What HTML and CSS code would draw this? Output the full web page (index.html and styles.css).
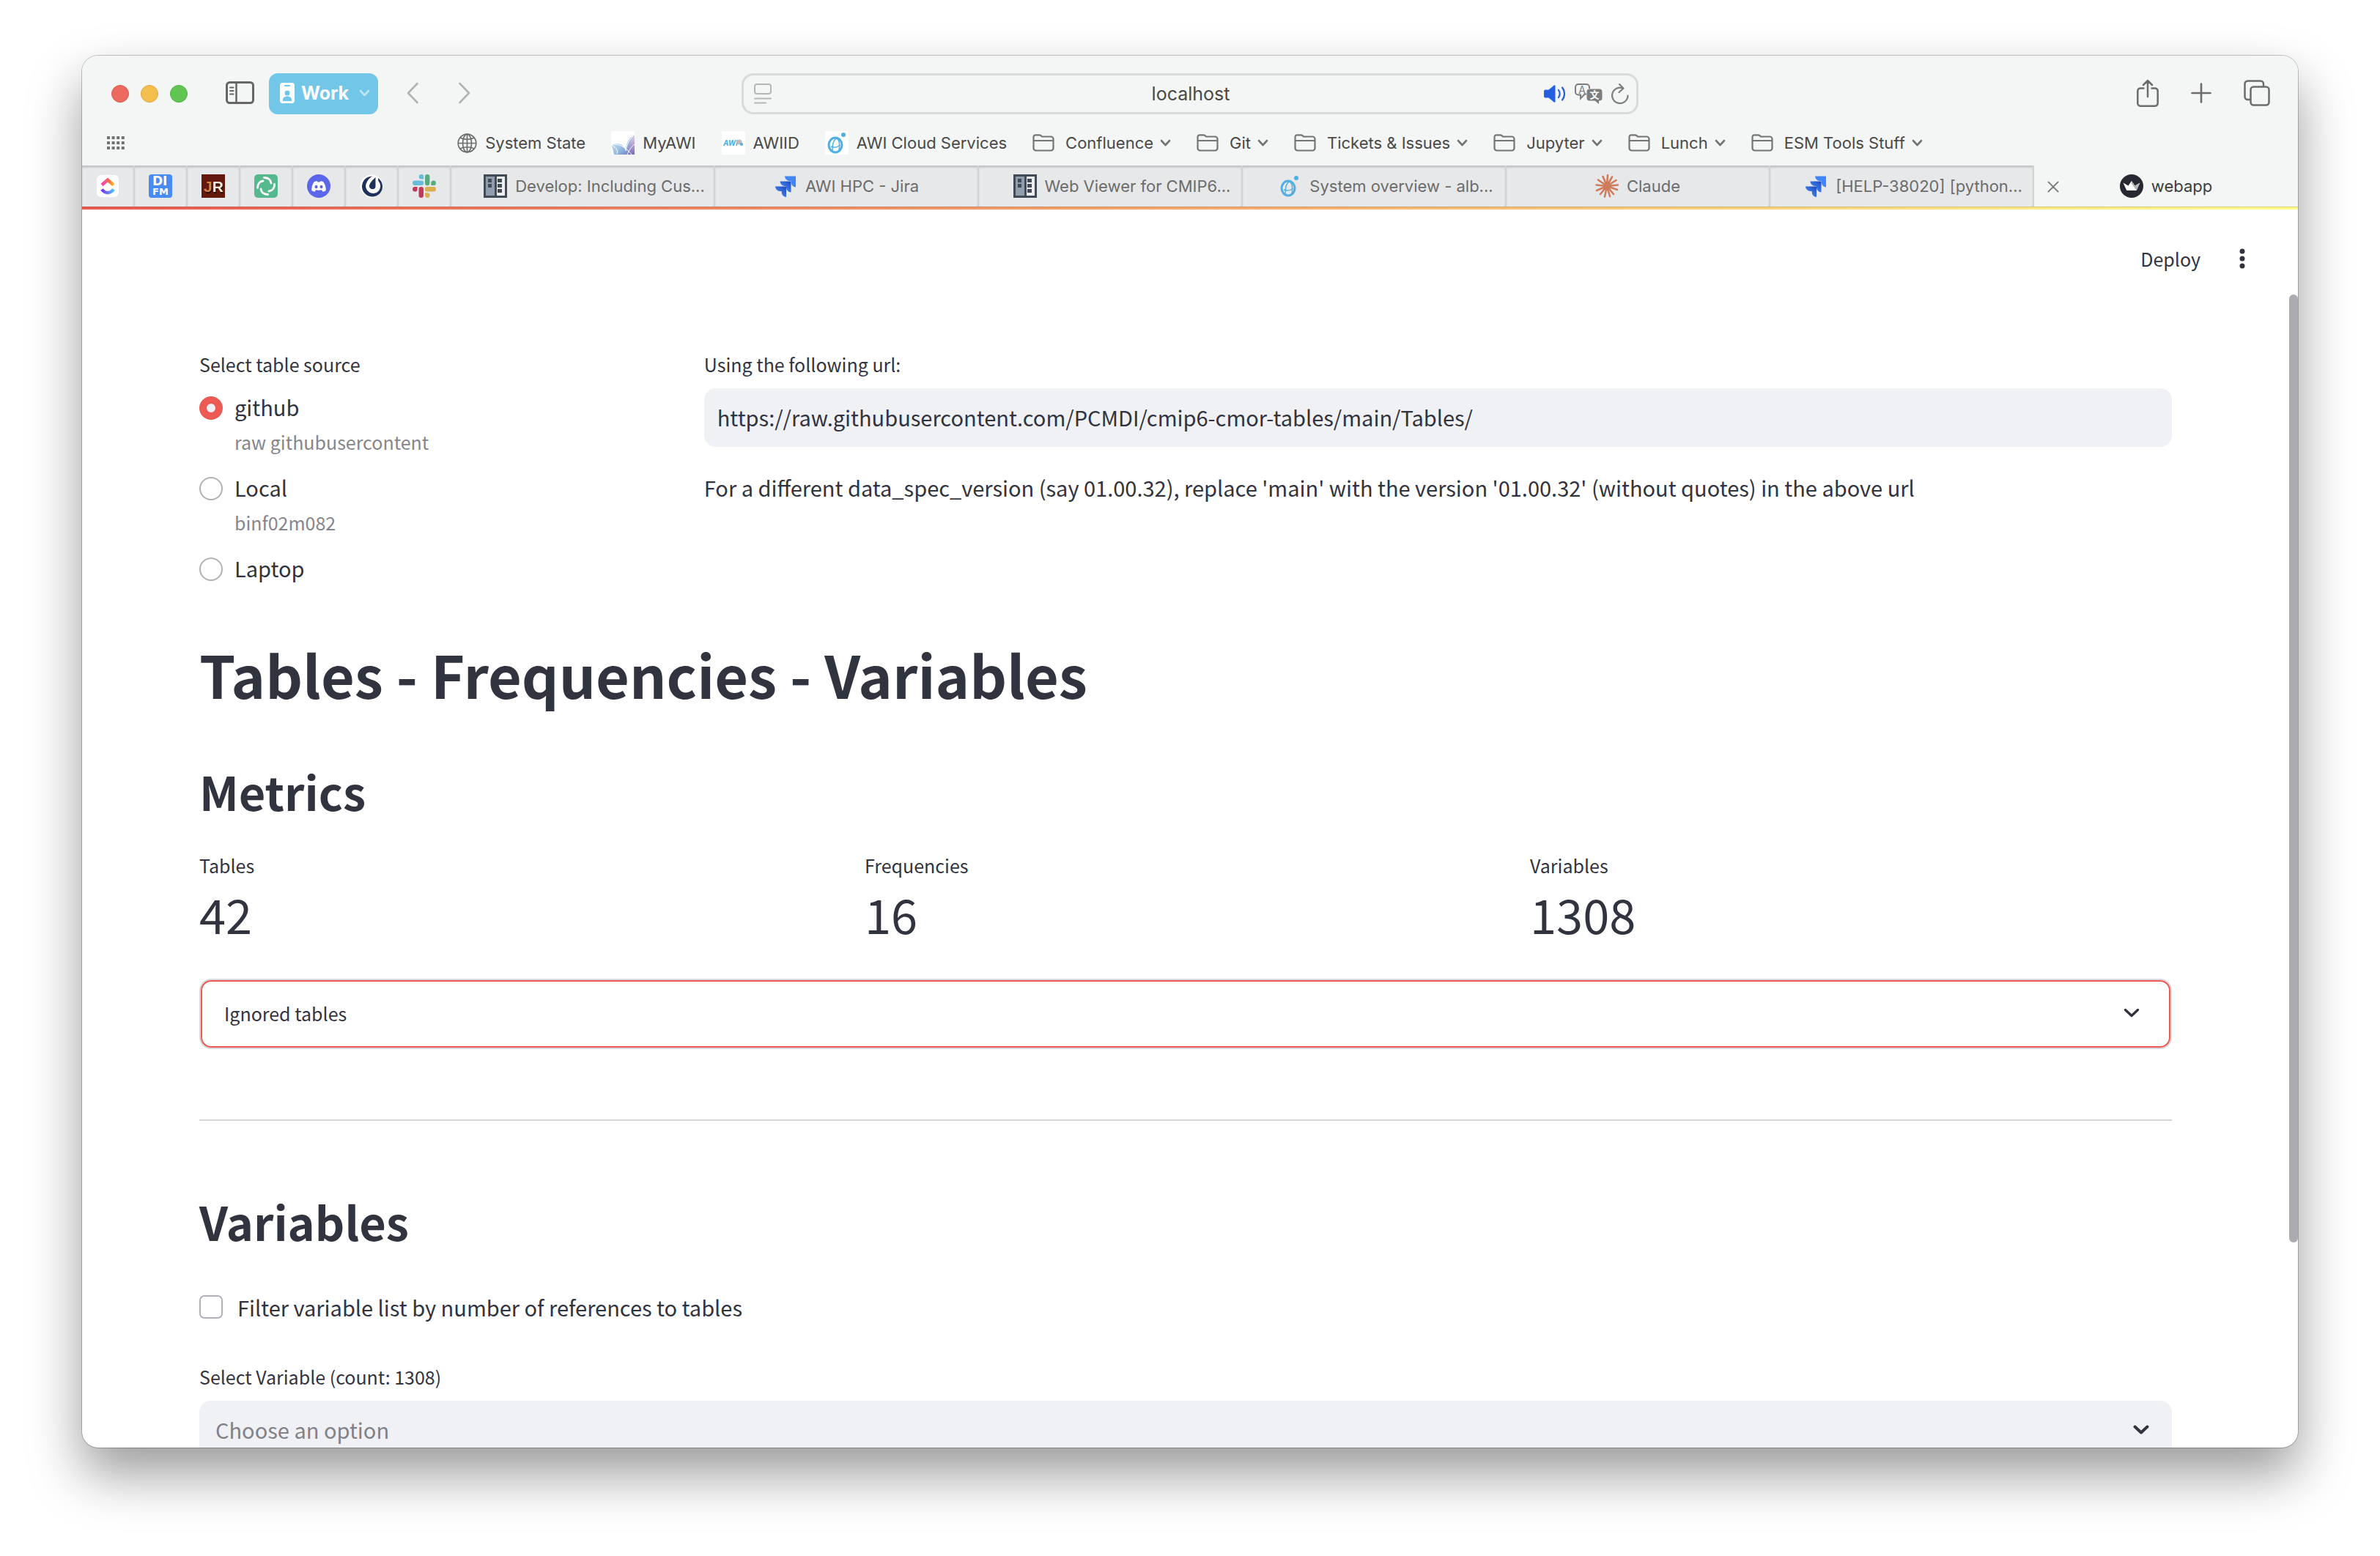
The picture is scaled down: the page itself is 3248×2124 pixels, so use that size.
FILE: index.html
```html
<!DOCTYPE html>
<html lang="en">
<head>
<meta charset="utf-8">
<meta name="viewport" content="width=device-width, initial-scale=1">
<title>webapp</title>
<link rel="stylesheet" href="styles.css">
</head>
<body>
<svg class="defs" aria-hidden="true">
  <defs>
    <linearGradient id="cu-top" x1="0" x2="1"><stop offset="0" stop-color="#f03fc0"/><stop offset=".6" stop-color="#fb6a4a"/><stop offset="1" stop-color="#ffbf2b"/></linearGradient>
    <linearGradient id="cu-bot" x1="0" x2="1"><stop offset="0" stop-color="#8430ee"/><stop offset="1" stop-color="#48c4fa"/></linearGradient>
    <linearGradient id="jira-fade" x1="1" y1="0" x2=".3" y2=".8"><stop offset="0" stop-color="#1c49b8"/><stop offset="1" stop-color="#4285fb"/></linearGradient>
    <linearGradient id="petal" x1="0" y1="0" x2="1" y2="1"><stop offset="0" stop-color="#e8f4fb"/><stop offset=".6" stop-color="#8fb6e2"/><stop offset="1" stop-color="#6a62b8"/></linearGradient>
    <linearGradient id="petal-pink" x1="0" y1="1" x2="0" y2="0"><stop offset="0" stop-color="#7b6fc0"/><stop offset="1" stop-color="#e9cfe6"/></linearGradient>
    <symbol id="folder" viewBox="0 0 30 24"><path d="M1.500 5V4a2.700 2.700 0 0 1 2.700-2.700h5.300c1 0 1.500.3 2.200 1l1.200 1.200h12.400a3.200 3.200 0 0 1 3.200 3.200v12.600a3.200 3.200 0 0 1-3.200 3.200H4.700a3.200 3.200 0 0 1-3.200-3.200zM1.500 9h27" fill="none" stroke="#737473" stroke-width="2.200"/></symbol>
    <symbol id="chev" viewBox="0 0 15 10"><path d="M2 2l5.500 6L13 2" fill="none" stroke="currentColor" stroke-width="2.600" stroke-linecap="round" stroke-linejoin="round"/></symbol>
    <symbol id="jira" viewBox="0 0 32 32"><path d="M15 2.500h15v15a6.500 6.500 0 0 1-6.300-6.500V9H21.500A6.500 6.500 0 0 1 15 2.500z" fill="#4285fb"/><path d="M8.500 9.500h15v15a6.500 6.500 0 0 1-6.500-6.500v-2h-2A6.500 6.500 0 0 1 8.500 9.500z" fill="url(#jira-fade)"/><path d="M2 16.500h15v14.500a6.500 6.500 0 0 1-6.300-6.500V23H8.500A6.500 6.500 0 0 1 2 16.500z" fill="url(#jira-fade)"/></symbol>
    <symbol id="board" viewBox="0 0 32 32"><path d="M0 0h32v32H0z" fill="#424b55"/><path d="M3 3h12v26H3z" fill="#8f9dac"/><path d="M18 3h11v26H18z" fill="#eceeef"/><path d="M6 6h5v5H6zM6 13h5v5H6zM19 6h6v5h-6zM19 13h6v5h-6zM19 20h6v5h-6z" fill="#424b55"/></symbol>
    <symbol id="orbit" viewBox="0 0 32 32"><g fill="none" stroke="#50aee2"><ellipse cx="14" cy="19" rx="9" ry="10" stroke-width="3"/><path d="M10 27c0-10 2-16 6-17 4 2 4 10 3 17M8 21c5 2 9 1 13-2" stroke-width="1.500"/></g><circle cx="25" cy="5" r="3" fill="#50aee2"/></symbol>
  </defs>
</svg>

<div class="window">
  <header class="toolbar">
    <div class="toolbar-main">
      <div class="group group-left">
        <div class="lights"><i class="light red"></i><i class="light yellow"></i><i class="light green"></i></div>
        <button class="icon-button sidebar-button" aria-label="Show sidebar"><svg width="40" height="32" viewBox="0 0 40 32" fill="none" stroke="#656665"><rect x="1.500" y="1.500" width="36" height="28" rx="4" stroke-width="3"/><path d="M14.500 2v27" stroke-width="2.500"/><path d="M6 8.500h4.500M6 13h4.500M6 17.500h4.500" stroke-width="2" stroke-linecap="round"/></svg></button>
        <button class="profile"><svg width="20" height="28" viewBox="0 0 20 28"><rect width="20" height="28" rx="4" fill="#fff"/><rect x="6" y="3" width="8" height="2" rx="1" fill="#72c6e8"/><circle cx="10" cy="14" r="3.500" fill="#72c6e8"/><path d="M4 25v-2c0-3 3-4.500 6-4.500s6 1.500 6 4.500v2z" fill="#72c6e8"/></svg><span>Work</span><svg class="profile-chev" width="15" height="10"><use href="#chev"/></svg></button>
        <button class="icon-button back" aria-label="Back"><svg width="18" height="30" viewBox="0 0 18 30"><path d="M15.500 2L3 15l12.500 13" fill="none" stroke="#b2b3b3" stroke-width="2.600" stroke-linecap="round" stroke-linejoin="round"/></svg></button>
        <button class="icon-button forward" aria-label="Forward"><svg width="18" height="30" viewBox="0 0 18 30"><path d="M2.500 2L15 15 2.500 28" fill="none" stroke="#b2b3b3" stroke-width="2.600" stroke-linecap="round" stroke-linejoin="round"/></svg></button>
      </div>
      <div class="address">
        <svg width="24" height="28" viewBox="0 0 24 28" fill="none" stroke="#b5b6b6" stroke-width="2" stroke-linecap="round"><rect x="1" y="1" width="22" height="13" rx="3"/><path d="M1 20.500h22M1 26.500h15"/></svg>
        <input class="address-input" type="text" value="localhost" aria-label="Address">
        <div class="address-icons">
          <svg width="30" height="24" viewBox="0 0 30 24"><path d="M0 8.500A2 2 0 0 1 2 6.500h4.500L13.500.700c1-.800 2-.300 2 .900v20.800c0 1.200-1 1.700-2 .900L6.500 17.500H2a2 2 0 0 1-2-2z" fill="#245fe0"/><path d="M20 7c2 3 2 7 0 10M25 3.500c4 5 4 12 0 17" fill="none" stroke="#245fe0" stroke-width="2.200" stroke-linecap="round"/></svg>
          <svg width="38" height="28" viewBox="0 0 38 28"><path d="M16 14.500h-2.500L8 20.500v-5H5a4 4 0 0 1-4-4V5a4 4 0 0 1 4-4h11a4 4 0 0 1 4 4v2" fill="none" stroke="#7c7d7c" stroke-width="2"/><text x="10" y="13.500" class="glyph-a">A</text><path d="M20.500 7.500h13a4 4 0 0 1 4 4v8a4 4 0 0 1-4 4H33V28l-5.500-4.500h-7a4 4 0 0 1-4-4v-8a4 4 0 0 1 4-4z" fill="#7c7d7c"/><text x="27" y="20" class="glyph-wen">文</text></svg>
          <svg width="24" height="28" viewBox="0 0 24 28" fill="none" stroke="#7c7d7c" stroke-width="2.200" stroke-linecap="round" stroke-linejoin="round"><path d="M22.500 16.500A10.700 10.700 0 1 1 16 6.500"/><path d="M11 1l5.500 5.500L10.500 12"/></svg>
        </div>
      </div>
      <div class="group group-right">
        <button class="icon-button" aria-label="Share"><svg width="30" height="38" viewBox="0 0 30 38" fill="none" stroke="#6b6c6b" stroke-width="2.500" stroke-linecap="round" stroke-linejoin="round"><path d="M9.500 12.500H5A3.700 3.700 0 0 0 1.300 16v17A3.700 3.700 0 0 0 5 36.700h20a3.700 3.700 0 0 0 3.700-3.700V16a3.700 3.700 0 0 0-3.700-3.500h-4.500M15 24V2M9 8l6-6 6 6"/></svg></button>
        <button class="icon-button" aria-label="New tab"><svg width="28" height="28" viewBox="0 0 28 28"><path d="M14 1.500v25M1.500 14h25" stroke="#6b6c6b" stroke-width="2.600" stroke-linecap="round"/></svg></button>
        <button class="icon-button" aria-label="Tab overview"><svg width="36" height="36" viewBox="0 0 36 36" fill="none" stroke="#6b6c6b" stroke-width="2.500"><rect x="9.500" y="9.500" width="25" height="25" rx="4"/><path d="M9 27H5.500a4 4 0 0 1-4-4V5.500a4 4 0 0 1 4-4H23a4 4 0 0 1 4 4V9"/></svg></button>
      </div>
    </div>
    <nav class="bookmarks" aria-label="Favorites">
      <button class="icon-button grid-button" aria-label="Show all"><svg width="24" height="18" viewBox="0 0 24 18" stroke="#727372" stroke-width="4" stroke-dasharray="4 2.600"><path d="M0 2h24M0 9h24M0 16h24"/></svg></button>
      <div class="bookmark-list">
        <a href="#" class="bookmark"><svg width="27" height="27" viewBox="0 0 27 27" fill="none" stroke="#6d6e6d" stroke-width="1.700"><circle cx="13.500" cy="13.500" r="12.300"/><ellipse cx="13.500" cy="13.500" rx="6" ry="12.300"/><path d="M13.500 1v25M1 13.500h25M4 6c5 3 14 3 19 0M4 21c5-3 14-3 19 0"/></svg>System State</a>
        <a href="#" class="bookmark"><svg width="32" height="32" viewBox="0 0 32 32"><path d="M0 0h32v32H0z" fill="#fff"/><path d="M8 17c6 0 10 4 12 10 0-8 3-16 9-20l3-1v26H4C3 27 2 22 0 20c3-2 5-3 8-3z" fill="url(#petal)"/><path d="M32 6v26h-8c-2-10 2-20 8-26z" fill="url(#petal-pink)"/><path d="M8 31C10 25 5 21 0 19M28 32C20 22 12 18 5 18M20 27c1-8 4-14 10-20M22 32c3-7 6-11 10-14" fill="none" stroke="#fff" stroke-width="1"/></svg>MyAWI</a>
        <a href="#" class="bookmark"><svg width="32" height="32" viewBox="0 0 32 32"><path d="M0 0h32v32H0z" fill="#fff"/><text x="2" y="20" class="glyph-awi">AWI</text><circle cx="24" cy="15" r="3.500" fill="#bcbcbc"/><circle cx="27" cy="18" r="2" fill="#50aee2"/></svg>AWIID</a>
        <a href="#" class="bookmark"><svg class="on-white" width="32" height="32"><use href="#orbit"/></svg>AWI Cloud Services</a>
        <a href="#" class="bookmark folder"><svg width="30" height="24"><use href="#folder"/></svg>Confluence<svg class="chev" width="15" height="10"><use href="#chev"/></svg></a>
        <a href="#" class="bookmark folder"><svg width="30" height="24"><use href="#folder"/></svg>Git<svg class="chev" width="15" height="10"><use href="#chev"/></svg></a>
        <a href="#" class="bookmark folder"><svg width="30" height="24"><use href="#folder"/></svg>Tickets &amp; Issues<svg class="chev" width="15" height="10"><use href="#chev"/></svg></a>
        <a href="#" class="bookmark folder"><svg width="30" height="24"><use href="#folder"/></svg>Jupyter<svg class="chev" width="15" height="10"><use href="#chev"/></svg></a>
        <a href="#" class="bookmark folder"><svg width="30" height="24"><use href="#folder"/></svg>Lunch<svg class="chev" width="15" height="10"><use href="#chev"/></svg></a>
        <a href="#" class="bookmark folder"><svg width="30" height="24"><use href="#folder"/></svg>ESM Tools Stuff<svg class="chev" width="15" height="10"><use href="#chev"/></svg></a>
      </div>
    </nav>
  </header>

  <nav class="tabs" aria-label="Tabs">
    <a href="#" class="tab" aria-label="ClickUp"><svg width="32" height="32" viewBox="0 0 32 32"><rect x="1" y="1" width="30" height="30" rx="6" fill="#fff"/><path d="M8 14.500l8-7 8 7" fill="none" stroke="url(#cu-top)" stroke-width="4.500"/><path d="M8 20.500c4.500 6 11.500 6 16 0" fill="none" stroke="url(#cu-bot)" stroke-width="4.500"/></svg></a>
    <a href="#" class="tab" aria-label="DI.FM"><svg width="32" height="32" viewBox="0 0 32 32"><rect width="32" height="32" rx="4" fill="#478bf5"/><text x="5" y="15" class="glyph-di">DI</text><text x="5" y="28" class="glyph-fm">FM</text></svg></a>
    <a href="#" class="tab" aria-label="JR"><svg width="32" height="32" viewBox="0 0 32 32"><path d="M0 0h32v32H0z" fill="#64180e"/><text x="3" y="24" class="glyph-jr"><tspan fill="#d8853c">J</tspan><tspan fill="#f2e6d8">R</tspan></text></svg></a>
    <a href="#" class="tab" aria-label="Element"><svg width="32" height="32" viewBox="0 0 32 32"><rect width="32" height="32" rx="5" fill="#56b88d"/><g fill="none" stroke="#fff" stroke-width="2.800" stroke-linecap="round"><path d="M13.500 4.500c5.500 0 9 3 9.500 7.500"/><path d="M27.500 13.500c0 5.500-3 9-7.500 9.500"/><path d="M18.500 27.500c-5.500 0-9-3-9.500-7.500"/><path d="M4.500 18.500c0-5.500 3-9 7.500-9.500"/></g></svg></a>
    <a href="#" class="tab" aria-label="Discord"><svg width="32" height="32" viewBox="0 0 32 32"><circle cx="16" cy="16" r="16" fill="#5b66ea"/><path d="M10 10l3.500-1 .8 1.500h3.400l.8-1.500 3.500 1c2.500 3.500 4 7.500 3.700 12-1.700 1-3 1.500-4.500 1.500l-1.200-2.200c-2.500.6-5.500.6-8 0l-1.200 2.200c-1.500 0-2.800-.5-4.500-1.500C6 17.500 7.500 13.500 10 10z" fill="#fff"/><ellipse cx="12.500" cy="17" rx="2" ry="2.200" fill="#5b66ea"/><ellipse cx="19.500" cy="17" rx="2" ry="2.200" fill="#5b66ea"/></svg></a>
    <a href="#" class="tab" aria-label="Mattermost"><svg width="32" height="32" viewBox="0 0 32 32"><circle cx="16" cy="16" r="15.500" fill="#fff"/><path d="M17 2.500a14 14 0 1 0 8 2.500l.3 4A10 10 0 1 1 9 12c1.500-4 4-7 8-9.500z" fill="#1e325c"/><path d="M21.500 4v12.500c0 5.500-9 5-8.500-1 .2-3 4-7.500 8.500-11.500z" fill="#1e325c"/></svg></a>
    <a href="#" class="tab" aria-label="Slack"><svg width="32" height="32" viewBox="0 0 32 32"><path d="M12 0a3.200 3.200 0 0 1 3.200 3.200v3.300H12A3.200 3.200 0 0 1 12 0zM3.300 8.500h8.700a3.200 3.200 0 0 1 0 6.500H3.300a3.200 3.200 0 0 1 0-6.500z" fill="#67bcdc"/><path d="M20.200 0a3.200 3.200 0 0 1 3.200 3.200V12A3.200 3.200 0 0 1 17 12V3.200A3.200 3.200 0 0 1 20.200 0zM25.300 15v-3.200a3.300 3.300 0 1 1 3.300 3.200z" fill="#57ab7d"/><path d="M20 17h8.700a3.200 3.200 0 0 1 0 6.500H20A3.200 3.200 0 0 1 20 17zM17 25.300h3.200a3.300 3.300 0 1 1-3.200 3.300z" fill="#dcae4e"/><path d="M6.600 17v3.200A3.300 3.300 0 1 1 3.300 17zM11.800 17a3.200 3.200 0 0 1 3.200 3.200v8.500a3.200 3.200 0 0 1-6.500 0v-8.500a3.200 3.200 0 0 1 3.300-3.200z" fill="#c23a5a"/></svg></a>
    <a href="#" class="tab clipped"><svg width="32" height="32"><use href="#board"/></svg>Develop: Including Cus...</a>
    <a href="#" class="tab"><svg width="32" height="32"><use href="#jira"/></svg>AWI HPC - Jira</a>
    <a href="#" class="tab clipped"><svg width="32" height="32"><use href="#board"/></svg>Web Viewer for CMIP6...</a>
    <a href="#" class="tab clipped"><svg width="32" height="32"><use href="#orbit"/></svg>System overview - alb...</a>
    <a href="#" class="tab"><svg width="32" height="32" viewBox="0 0 32 32"><path d="M16 16L17 1M16 16L23 3.500M16 16L28.500 8M16 16l15-1.500M16 16l14 5M16 16l9 11M16 16l4 14M16 16l-3 14.500M16 16L7 27M16 16L2 22M16 16L1.500 14.500M16 16L4 7.500M16 16L10.500 3" stroke="#cf7b5c" stroke-width="2.600" stroke-linecap="round"/></svg>Claude</a>
    <a href="#" class="tab clipped"><svg width="32" height="32"><use href="#jira"/></svg>[HELP-38020] [python...</a>
    <div class="tab active">
      <button class="icon-button close" aria-label="Close tab"><svg width="16" height="16" viewBox="0 0 16 16"><path d="M1.500 1.500l13 13M14.500 1.500l-13 13" stroke="#7a7b7a" stroke-width="1.800" stroke-linecap="round"/></svg></button>
      <svg width="32" height="32" viewBox="0 0 32 32"><circle cx="16" cy="16" r="16" fill="#272831"/><path d="M4.500 11.500l7 4L16 9l4.500 6.500 7-4-4.300 9.500c-.3.700-.7 1-1.400 1H10.200c-.7 0-1.100-.3-1.400-1z" fill="#fff"/><path d="M27.500 11.500l-7 4L16 9v4l6.500 8.500z" fill="#b4b4b6"/></svg>webapp
    </div>
  </nav>

  <div class="page">
    <div class="decoration"></div>
    <header class="app-header">
      <button class="deploy">Deploy</button>
      <button class="icon-button" aria-label="Main menu"><svg width="8" height="28" viewBox="0 0 8 28" fill="#31333f"><circle cx="4" cy="4" r="3.500"/><circle cx="4" cy="14" r="3.500"/><circle cx="4" cy="24" r="3.500"/></svg></button>
    </header>

    <main class="content">
      <section class="source">
        <fieldset class="radios">
          <legend class="label">Select table source</legend>
          <label class="option"><input type="radio" name="source" checked><span>github</span><small>raw githubusercontent</small></label>
          <label class="option"><input type="radio" name="source"><span>Local</span><small>binf02m082</small></label>
          <label class="option"><input type="radio" name="source"><span>Laptop</span></label>
        </fieldset>
        <div>
          <label class="label" for="url">Using the following url:</label>
          <input class="field" id="url" type="text" value="https://raw.githubusercontent.com/PCMDI/cmip6-cmor-tables/main/Tables/">
          <p class="note">For a different data_spec_version (say 01.00.32), replace 'main' with the version '01.00.32' (without quotes) in the above url</p>
        </div>
      </section>

      <h1>Tables - Frequencies - Variables</h1>
      <h2>Metrics</h2>
      <dl class="metrics">
        <div><dt class="label">Tables</dt><dd>42</dd></div>
        <div><dt class="label">Frequencies</dt><dd>16</dd></div>
        <div><dt class="label">Variables</dt><dd>1308</dd></div>
      </dl>

      <details class="expander">
        <summary>Ignored tables<svg width="22" height="14" viewBox="0 0 22 14"><path d="M2.500 2.500L11 10.500l8.500-8" fill="none" stroke="#31333f" stroke-width="3.400" stroke-linecap="round" stroke-linejoin="round"/></svg></summary>
      </details>
      <hr>

      <h2>Variables</h2>
      <label class="check"><input type="checkbox"><span>Filter variable list by number of references to tables</span></label>
      <label class="label" for="variable">Select Variable (count: 1308)</label>
      <div class="select-wrap">
        <select class="field" id="variable"><option>Choose an option</option></select>
        <svg width="22" height="14" viewBox="0 0 22 14"><path d="M2.500 2.500L11 10.500l8.500-8" fill="none" stroke="#31333f" stroke-width="4" stroke-linecap="round" stroke-linejoin="round"/></svg>
      </div>
    </main>
    <div class="scroll-thumb"></div>
  </div>
</div>
</body>
</html>
```
FILE: styles.css
```css
* { box-sizing: border-box; }

:root {
  --ink: #31333f;
  --muted: #85868c;
  --field: #f0f1f5;
  --accent: #ec5a53;
  --chrome: #f4f6f5;
  --ui: Inter, "Liberation Sans", sans-serif;
  --app: "Noto Sans CJK JP", "Noto Sans CJK SC", "Noto Sans", sans-serif;
}

body {
  margin: 0;
  padding: 76px 112px 148px;
  height: 100vh;
  background: #fff;
  font-family: var(--ui);
}

a { color: inherit; text-decoration: none; }
svg { display: block; flex: none; }
button { font: inherit; color: inherit; border: 0; padding: 0; background: none; }
.icon-button { display: flex; align-items: center; }
.defs { position: absolute; width: 0; height: 0; }

/* Window frame */
.window {
  display: flex;
  flex-direction: column;
  height: 100%;
  overflow: hidden;
  border-radius: 22px;
  background: #fff;
  box-shadow: 0 0 0 1px rgba(0, 0, 0, .22), 0 36px 72px rgba(0, 0, 0, .4);
}

.toolbar { flex: none; padding-top: 24px; background: var(--chrome); }
.toolbar-main {
  display: grid;
  grid-template-columns: 1fr minmax(0, 1224px) 1fr;
  height: 56px;
}
.group { display: flex; align-items: center; }
.group-left { padding-left: 40px; }
.group-right { justify-content: flex-end; gap: 44px; padding-right: 38px; }
.group .icon-button { margin-bottom: 3px; }

.lights { display: flex; gap: 16px; }
.light { width: 24px; height: 24px; border-radius: 50%; border: 1px solid; }
.light.red { background: #ec6a5e; border-color: #d9584c; }
.light.yellow { background: #f4bf4f; border-color: #dca73a; }
.light.green { background: #61c554; border-color: #4fae43; }

.sidebar-button { margin-left: 52px; }
.profile {
  display: flex;
  align-items: center;
  height: 56px;
  margin-left: 19px;
  padding: 0 11px 2px 15px;
  border-radius: 12px;
  background: #72c6e8;
  color: #fff;
  font-size: 25px;
  font-weight: 700;
}
.profile span { margin: 0 14px 0 9px; }
.profile-chev { color: #bfe5f5; }
.back { margin-left: 38px; }
.forward { margin-left: 53px; }

.address {
  position: relative;
  display: flex;
  align-items: center;
  justify-content: space-between;
  padding: 0 10px 0 14px;
  border: 3px solid #d9dbda;
  border-radius: 16px;
}
.address-input {
  flex: 1;
  min-width: 0;
  padding: 0 0 0 90px;
  border: 0;
  background: none;
  color: #484948;
  font: 25px/32px var(--ui);
  text-align: center;
}
.address-icons { display: flex; align-items: center; gap: 12px; }

.glyph-a { font: 14px var(--ui); fill: #7c7d7c; text-anchor: middle; }
.glyph-wen { font: bold 13px "Noto Sans CJK SC", sans-serif; fill: #fff; text-anchor: middle; }
.glyph-awi { font: italic bold 10px var(--ui); fill: #50aee2; }
.glyph-di { font: bold 17px "DejaVu Sans", sans-serif; fill: #fff; }
.glyph-fm { font: bold 13px "DejaVu Sans", sans-serif; fill: #fff; }
.glyph-jr { font: bold 21px "Liberation Sans", sans-serif; filter: drop-shadow(1px 2px 0 #2a0d08); }

.bookmarks {
  display: grid;
  grid-template-columns: 1fr auto 1fr;
  align-items: center;
  height: 58px;
  margin: 10px 0 2px;
}
.grid-button { margin-left: 34px; }
.bookmark-list { display: flex; gap: 35px; }
.bookmark {
  display: flex;
  align-items: center;
  gap: 11px;
  height: 32px;
  color: #484948;
  font-size: 22px;
  white-space: nowrap;
}
.bookmark.folder { gap: 15px; }
.bookmark .chev { margin-left: -6px; color: #737473; }
.on-white { background: #fff; }

/* Tab strip: seven pinned tabs, then equal-width ones */
.tabs {
  display: grid;
  flex: none;
  grid-template-columns: repeat(7, 72px) repeat(7, minmax(0, 1fr));
  height: 56px;
  color: #6b6c6c;
  font-size: 22px;
}
.tab {
  position: relative;
  display: flex;
  align-items: center;
  justify-content: center;
  gap: 11px;
  border-right: 2px solid #d0d2d3;
  background: #e7e8ea;
  box-shadow: inset 0 3px 3px -1px rgba(0, 0, 0, .2);
  white-space: nowrap;
}
.tab.clipped { padding-left: 32px; }
.tab.active { border: 0; background: var(--chrome); box-shadow: none; color: #3c3d3c; }
.close { position: absolute; left: 18px; top: 21px; }

/* Page */
.page {
  position: relative;
  flex: 1;
  min-height: 0;
  overflow: hidden;
  color: var(--ink);
  font: 29px/40px var(--app);
}
.decoration {
  height: 4px;
  background: linear-gradient(90deg, #eb5a50, #f4a86d 50%, #fdfc8b);
  box-shadow: inset 0 1px rgba(0, 0, 0, .15);
}
.app-header {
  display: flex;
  align-items: center;
  justify-content: flex-end;
  gap: 53px;
  height: 116px;
  padding: 18px 72px 0 0;
}
.deploy { font-size: 25px; }

.content { padding: 75px 172px 0 160px; }
.label { display: block; padding: 0; font-size: 25px; line-height: 40px; }

.source { display: grid; grid-template-columns: 1fr 3fr; gap: 21px; }
.radios { min-width: 0; margin: 0; padding: 0; border: 0; }
.option {
  display: grid;
  grid-template-columns: 32px 1fr;
  column-gap: 16px;
  align-items: center;
  margin-top: 24px;
}
.label + .option { margin-top: 20px; }
.option span { line-height: 36px; padding-bottom: 4px; }
.option small { grid-column: 2; margin-top: 6px; color: var(--muted); font-size: 25px; }

input[type="radio"], input[type="checkbox"] {
  appearance: none;
  flex: none;
  width: 32px;
  height: 32px;
  margin: 0;
  border: 2px solid #b0b1b6;
  border-radius: 50%;
  background: #fff;
}
input[type="radio"]:checked { border: 10px solid var(--accent); background: var(--field); }
input[type="checkbox"] { border-radius: 7px; }

.field {
  display: block;
  appearance: none;
  width: 100%;
  height: 80px;
  margin-top: 13px;
  padding: 0 18px 2px;
  border: 0;
  border-radius: 16px;
  background: var(--field);
  color: var(--ink);
  font: 29px/40px var(--app);
}
.note { margin: 32px 0 0; line-height: 46px; }

h1, h2 { font-weight: 700; }
h1 { margin: 70px 0 63px; font-size: 79px; line-height: 106px; }
h2 { margin: 0; font-size: 63px; line-height: 88px; }

.metrics { display: grid; grid-template-columns: repeat(3, 1fr); gap: 32px; margin: 37px 0 46px; }
.metrics dd { margin: 3px 0 0; font-size: 65px; line-height: 86px; }

.expander {
  border: 2px solid #d6d7da;
  border-radius: 16px;
}
.expander summary {
  display: flex;
  align-items: center;
  justify-content: space-between;
  height: 92px;
  padding: 0 40px 2px 30px;
  border: 2px solid var(--accent);
  border-radius: 14px;
  font-size: 25px;
  list-style: none;
}
hr { height: 2px; margin: 96px 0 93px; border: 0; background: #d6d6d9; }

.check { display: flex; align-items: center; gap: 20px; margin: 53px 0 55px; }
.select-wrap { position: relative; }
.select-wrap .field { padding-left: 22px; color: #808188; }
.select-wrap svg { position: absolute; right: 31px; top: 33px; }

.scroll-thumb {
  position: absolute;
  top: 120px;
  right: 0;
  width: 12px;
  height: 1294px;
  border-radius: 6px;
  background: #acabb1;
}
```
